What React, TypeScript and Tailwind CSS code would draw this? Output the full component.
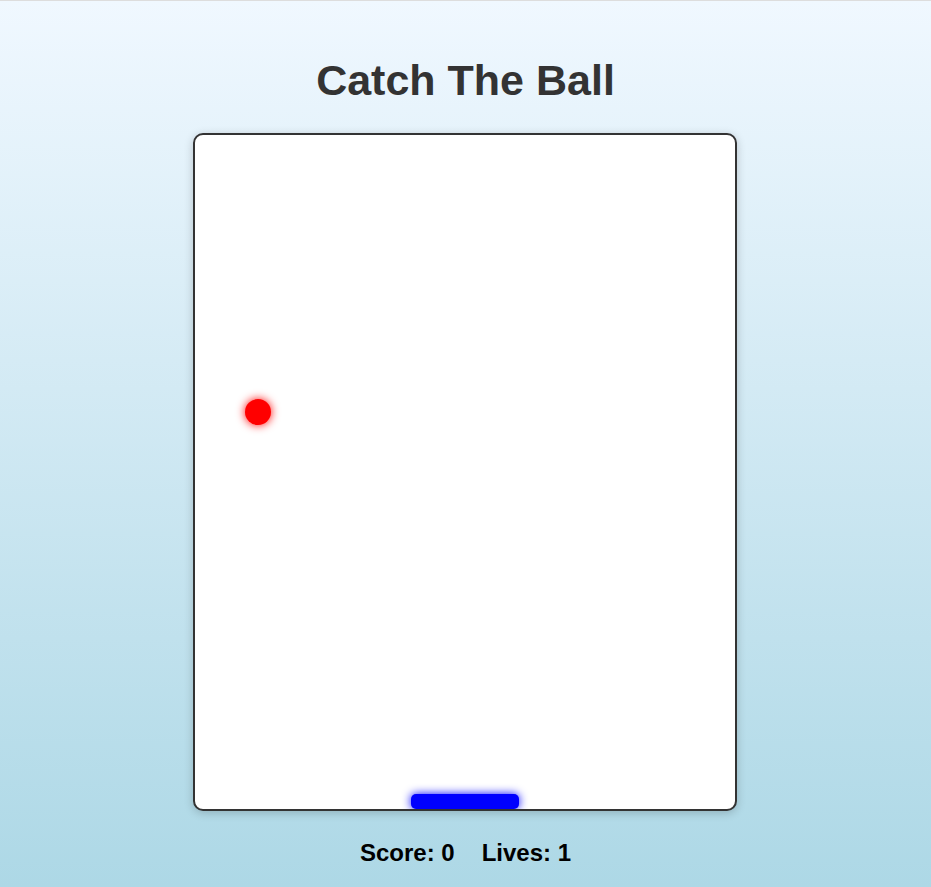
export default function App() {
    const ball = { x: 50, y: 264 };

    return (
        <div className="min-h-screen border-t border-[#dddddd] bg-gradient-to-b from-[#f0f8ff] to-[#add8e6] flex flex-col items-center font-['Liberation_Sans',Arial,sans-serif]">
            {/* Title */}
            <h1 className="mt-[55px] text-[43px] leading-[48px] font-bold text-[#333333]">Catch The Ball</h1>

            {/* Board */}
            <div className="relative mt-[29px] mr-px w-[544px] h-[678px] bg-white border-2 border-[#333333] rounded-[10px] shadow-[0_2px_10px_rgba(0,0,0,0.2)] overflow-hidden">
                <div
                    className="absolute w-[26px] h-[26px] rounded-full bg-[#ff0000] shadow-[0_0_10px_#ff0000]"
                    style={{ left: ball.x, top: ball.y }}
                />
                <div className="absolute bottom-0 left-[216px] w-[108px] h-[15px] rounded-[5px] bg-[#0000ff] shadow-[0_0_10px_#0000ff]" />
            </div>

            {/* Stats */}
            <div className="mt-[28px] flex gap-[27px] text-[24px] leading-[28px] font-bold text-black">
                <span>Score: 0</span>
                <span>Lives: 1</span>
            </div>
        </div>
    );
}
